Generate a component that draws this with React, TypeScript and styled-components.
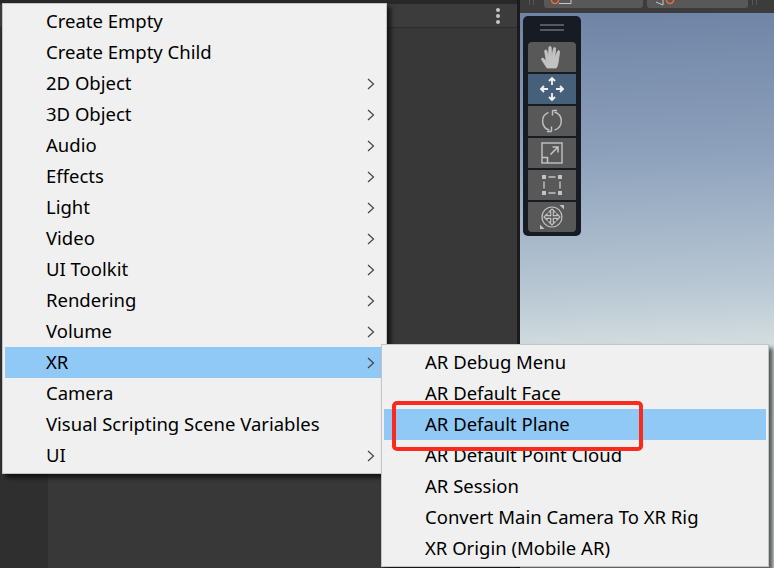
import React from "react";
import styled, { createGlobalStyle } from "styled-components";

const Global = createGlobalStyle`
  html, body { margin: 0; padding: 0; width: 774px; height: 568px; overflow: hidden; background: #383838; }
`;
const Stage = styled.div`
  position: relative; width: 774px; height: 568px; overflow: hidden;
  display: flex; font-family: "Noto Sans", "Open Sans", sans-serif;
`;
const LeftPane = styled.div`
  width: 517px; display: flex; flex-direction: column; background: #383838;
`;
const TopEdge = styled.div`height: 4px; background: #282828;`;
const PanelHeader = styled.div`
  height: 23px; background: #3c3c3c; border-bottom: 1px solid #2e2e2e;
  display: flex; align-items: center; justify-content: flex-end; padding-right: 17px;
`;
const Kebab = styled.div`display: flex; flex-direction: column; gap: 2px;`;
const Dot = styled.span`width: 4px; height: 4px; border-radius: 50%; background: #c4c4c4;`;
const PanelBody = styled.div`flex: 1; display: flex;`;
const Gutter = styled.div`width: 48px; background: #2f2f2f;`;
const Divider = styled.div`width: 3px; background: #1b1b1b;`;
const RightPane = styled.div`flex: 1; display: flex; flex-direction: column;`;
const SceneBar = styled.div`
  height: 13px; flex: none; background: #3c3c3c; display: flex; padding-left: 9px; align-items: flex-start;
`;
const Handle = styled.div<{ $gap: number }>`
  width: 5px; height: 5px; margin-right: ${(p) => p.$gap}px; flex: none;
  border-left: 1px solid #585858; border-right: 1px solid #585858; box-sizing: border-box;
`;
const BarButton = styled.div<{ $w: number }>`
  display: flex; width: ${(p) => p.$w}px; height: 8px; margin-right: 4px; flex: none;
  background: #585858; border-radius: 0 0 3px 3px; overflow: hidden;
`;
const Scene = styled.div`
  flex: 1; padding: 3px; background: linear-gradient(178deg, #6f84a5 0%, #8ca0bb 25%, #b9c8d3 50%, #d8e1e1 62%, #e3e8e6 100%);
`;
const Tools = styled.div`
  width: 58px; height: 220px; box-sizing: border-box; background: #171c24; border-radius: 5px;
  padding: 8px 5px 0; display: flex; flex-direction: column; gap: 2px;
`;
const Grip = styled.div`
  height: 7px; margin-bottom: 9px; display: flex; flex-direction: column; gap: 3px; align-items: center; flex: none;
`;
const GripLine = styled.span`width: 24px; height: 2px; background: #565a60;`;
const ToolBtn = styled.div<{ $on?: boolean; $pos?: "top" | "bottom" }>`
  width: 48px; height: 30px; flex: none; display: flex; align-items: center; justify-content: center;
  background: ${(p) => (p.$on ? "#46607c" : "#585858")};
  border-radius: ${(p) => (p.$pos === "top" ? "4px 4px 0 0" : p.$pos === "bottom" ? "0 0 4px 4px" : "0")};
  color: ${(p) => (p.$on ? "#f2f2f2" : "#c2c2c2")};
`;
const Menu = styled.div<{ $x: number; $y: number; $w: number; $z: number }>`
  position: absolute; left: ${(p) => p.$x}px; top: ${(p) => p.$y}px; width: ${(p) => p.$w}px;
  z-index: ${(p) => p.$z};
  box-sizing: border-box; background: #f0f0f0; border: 1px solid #c4c4c4; padding: 2px;
  box-shadow: 4px 4px 4px rgba(0,0,0,.6);
`;
const Item = styled.div<{ $active?: boolean; $pad: number }>`
  height: 31px; display: flex; align-items: center; justify-content: space-between;
  box-sizing: border-box; padding: 0 9px 2px ${(p) => p.$pad}px;
  background: ${(p) => (p.$active ? "#90c8f6" : "transparent")};
  color: #000; font-size: 18.5px; white-space: nowrap; line-height: 29px;
`;
const ChevronBox = styled.span`display: flex; padding-top: 2px;`;
const Highlight = styled.div`
  position: absolute; left: 392px; top: 401px; width: 251px; height: 50px; box-sizing: border-box;
  border: 4px solid #fb2a1c; border-radius: 5px; z-index: 5;
`;

const Chevron = () => (
  <ChevronBox>
    <svg width="8" height="12" viewBox="0 0 8 12" fill="none" stroke="#444" strokeWidth="1.2">
      <path d="M1 1l5.500 5L1 11" />
    </svg>
  </ChevronBox>
);

const ic = { fill: "none", stroke: "currentColor", strokeWidth: 1.4 };
const Hand = () => (
  <svg width="24" height="24" viewBox="0 0 24 24" fill="currentColor" stroke="currentColor" strokeWidth="0.8" strokeLinejoin="round">
    <path d="M7 23L1.700 14.800c-.8-1.300.9-2.400 1.900-1.300l2.600 2.700L4.700 6.300c-.2-1.500 1.900-1.800 2.200-.3l1.500 6.200.5-9.700c.1-1.500 2.200-1.500 2.300 0l.5 9.600 1.800-8.700c.3-1.400 2.300-1.100 2.200.4l-1 8.900 2.900-6.400c.6-1.300 2.500-.6 2 .8L18 18.500c-.5 1.600-1 4.500-2 4.500z" />
  </svg>
);
const Move = () => (
  <svg width="26" height="26" viewBox="0 0 26 26" {...ic} strokeWidth={1.8}>
    <path d="M13 2v7M10 5l3-3 3 3M13 17v7M10 21l3 3 3-3M2 13h7M5 10l-3 3 3 3M17 13h7M21 10l3 3-3 3" />
  </svg>
);
const Rotate = () => (
  <svg width="24" height="24" viewBox="0 0 24 24" {...ic}>
    <path d="M8.500 3.300A9.500 9.500 0 0 0 9.500 21.200M14.500 3A9.500 9.500 0 0 1 14.500 21.200" />
    <path d="M12.500 1.500h4.500M12.500 1.500v5M11.500 22.500H7M11.500 22.500v-5" />
  </svg>
);
const Scale = () => (
  <svg width="22" height="22" viewBox="0 0 22 22" {...ic}>
    <rect x="1" y="1" width="20" height="20" />
    <path d="M1 15.500h5.500V21M9.500 12.500L17 5M11.500 5H17v5.500" strokeWidth="1.600" />
  </svg>
);
const RectTool = () => (
  <svg width="22" height="22" viewBox="0 0 22 22" fill="currentColor">
    <path d="M1 1h4v4H1zM17 1h4v4h-4zM1 17h4v4H1zM17 17h4v4h-4zM7.500 2.300h7v1.400h-7zM7.500 18.300h7v1.400h-7zM2.300 7.500h1.400v7H2.300zM18.300 7.500h1.400v7h-1.400z" />
  </svg>
);
const Transform = () => (
  <svg width="26" height="26" viewBox="0 0 26 26" {...ic} strokeWidth={1.2}>
    <circle cx="13" cy="13" r="10" />
    <path d="M13 5l3 3h-1.700v3.700H18V10l3 3-3 3v-1.700h-3.700V18H16l-3 3-3-3h1.700v-3.700H8V16l-3-3 3-3v1.700h3.700V8H10z" />
    <path d="M1 25v-4.500l4.500 4.500zM25 1v4.500L20.500 1z" fill="currentColor" stroke="none" />
  </svg>
);

const main: [string, boolean?][] = [
  ["Create Empty"], ["Create Empty Child"], ["2D Object", true], ["3D Object", true],
  ["Audio", true], ["Effects", true], ["Light", true], ["Video", true], ["UI Toolkit", true],
  ["Rendering", true], ["Volume", true], ["XR", true], ["Camera"],
  ["Visual Scripting Scene Variables"], ["UI", true],
];
const sub = [
  "AR Debug Menu", "AR Default Face", "AR Default Plane", "AR Default Point Cloud",
  "AR Session", "Convert Main Camera To XR Rig", "XR Origin (Mobile AR)",
];

export default function App() {
  return (
    <Stage>
      <Global />
      <LeftPane>
        <TopEdge />
        <PanelHeader>
          <Kebab><Dot /><Dot /><Dot /></Kebab>
        </PanelHeader>
        <PanelBody><Gutter /></PanelBody>
      </LeftPane>
      <Divider />
      <RightPane>
        <SceneBar>
          <Handle $gap={10} />
          <BarButton $w={99}>
            <svg width="99" height="8" viewBox="0 0 99 8" fill="none">
              <circle cx="11" cy="0" r="3.500" stroke="#f0673a" strokeWidth="1.500" />
              <path d="M15 3.500h12V0" stroke="#c8c8c8" />
            </svg>
          </BarButton>
          <BarButton $w={101}>
            <svg width="101" height="8" viewBox="0 0 101 8" fill="none">
              <path d="M9 2l7 3V0" stroke="#c8c8c8" />
              <circle cx="23" cy="0" r="3.500" stroke="#f0673a" strokeWidth="1.500" />
            </svg>
          </BarButton>
          <Handle $gap={0} />
        </SceneBar>
        <Scene>
          <Tools>
            <Grip><GripLine /><GripLine /></Grip>
            <ToolBtn $pos="top"><Hand /></ToolBtn>
            <ToolBtn $on><Move /></ToolBtn>
            <ToolBtn><Rotate /></ToolBtn>
            <ToolBtn><Scale /></ToolBtn>
            <ToolBtn><RectTool /></ToolBtn>
            <ToolBtn $pos="bottom"><Transform /></ToolBtn>
          </Tools>
        </Scene>
      </RightPane>
      <Menu $x={2} $y={3} $w={385} $z={1}>
        {main.map(([t, c]) => (
          <Item key={t} $pad={41} $active={t === "XR"}>
            <span>{t}</span>{c && <Chevron />}
          </Item>
        ))}
      </Menu>
      <Menu $x={381} $y={344} $w={388} $z={2}>
        {sub.map((t) => (
          <Item key={t} $pad={41} $active={t === "AR Default Plane"}><span>{t}</span></Item>
        ))}
      </Menu>
      <Highlight />
    </Stage>
  );
}
